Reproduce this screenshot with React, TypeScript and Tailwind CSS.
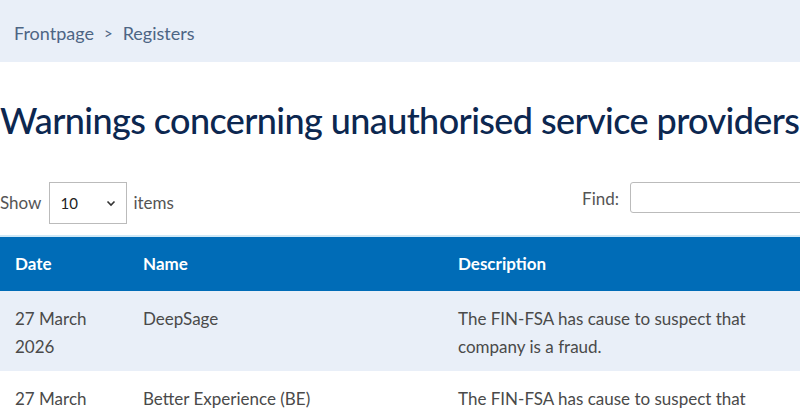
import React from "react";

const rows = [
  { date: ["27 March", "2026"], name: "DeepSage", desc: "The FIN-FSA has cause to suspect that company is a fraud." },
  { date: ["27 March", "2026"], name: "Better Experience (BE)", desc: "The FIN-FSA has cause to suspect that company is a fraud." },
];

export default function App() {
  return (
    <div className="w-[800px] h-[420px] overflow-hidden bg-white font-['Lato','Noto_Sans',sans-serif]">
      <div className="h-[62px] bg-[#e9eff8] flex items-center pl-[14px] pt-[4px] text-[18px] text-[#4d6584]">
        <span>Frontpage</span>
        <span className="mx-[10px] text-[15px]">&gt;</span>
        <span>Registers</span>
      </div>
      <h1 className="mt-[36px] text-[36px] leading-[44px] text-[#0c2750] font-medium whitespace-nowrap tracking-[-0.6px]">
        Warnings concerning unauthorised service providers
      </h1>
      <div className="mt-[40px] flex items-start justify-between h-[44px]">
        <div className="flex items-center text-[17px] text-[#555]">
          <span>Show</span>
          <div className="ml-[8px] mr-[6px] w-[78px] h-[42px] border border-[#bbb] flex items-center justify-between px-[10px] text-[#222]">
            <span className="text-[15px]">10</span>
            <svg width="10" height="7" viewBox="0 0 10 7"><path d="M1.5 1.5 L5 5 L8.5 1.5" stroke="#333" strokeWidth="1.6" fill="none" /></svg>
          </div>
          <span>items</span>
        </div>
        <div className="flex items-start text-[17px] text-[#555]">
          <span className="mr-[11px] mt-[4px]">Find:</span>
          <div className="w-[190px] h-[31px] border border-[#bbb] rounded-[3px] mr-[-20px]" />
        </div>
      </div>
      <table className="mt-[9px] w-full border-collapse text-[17px]">
        <thead>
          <tr className="bg-[#006cb7] border-t-2 border-[#cfe8f6] h-[55px] text-white font-bold">
            <th className="text-left font-bold pl-[15px] w-[143px]">Date</th>
            <th className="text-left font-bold w-[315px]">Name</th>
            <th className="text-left font-bold">Description</th>
          </tr>
        </thead>
        <tbody className="text-[#4a4a4a] leading-[28px]">
          {rows.map((r, i) => (
            <tr key={i} className={i % 2 === 0 ? "bg-[#e9eff8]" : "bg-white"}>
              <td className="pl-[15px] pt-[14px] pb-[10px] align-top">{r.date[0]}<br />{r.date[1]}</td>
              <td className="pt-[14px] align-top">{r.name}</td>
              <td className="pt-[14px] align-top pr-[30px]">{r.desc}</td>
            </tr>
          ))}
        </tbody>
      </table>
    </div>
  );
}
